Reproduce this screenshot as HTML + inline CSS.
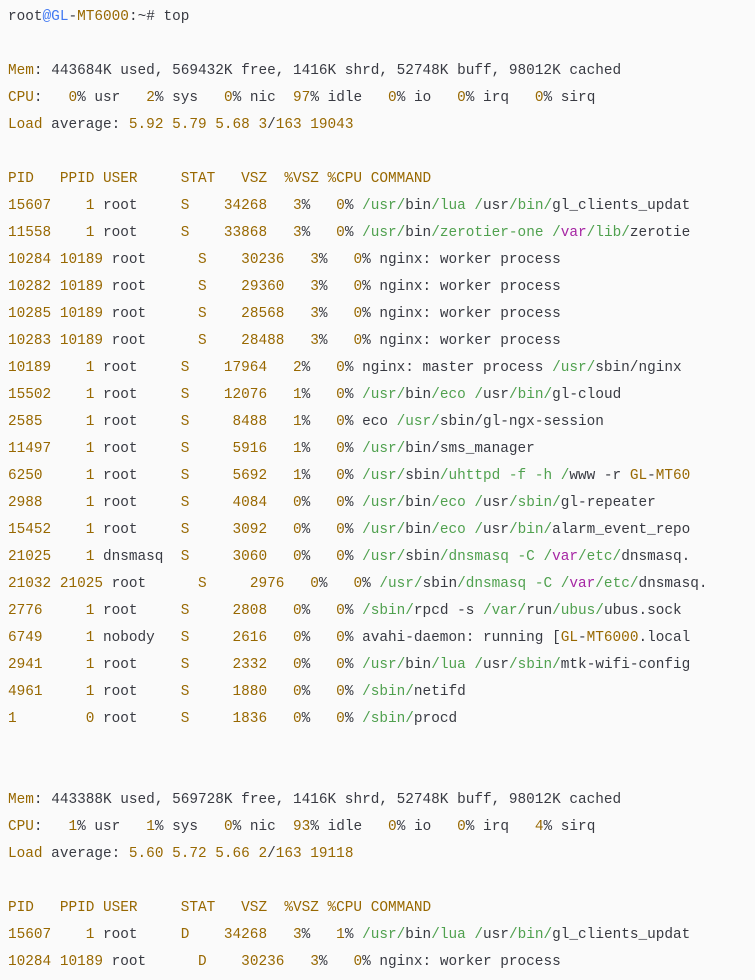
<!DOCTYPE html>
<html><head><meta charset="utf-8"><style>
html,body{margin:0;padding:0;background:#fafafa;width:755px;height:980px;overflow:hidden}
pre{margin:0;padding:4px 0 0 8px;font-family:"Liberation Mono",monospace;font-size:14.4px;line-height:27px;color:#383a42;white-space:pre}
.n{color:#986801}.g{color:#50a14f}.b{color:#4078f2}.p{color:#a626a4}
</style></head><body><pre>root<span class="b">@GL</span>-<span class="n">MT6000</span>:~# top

<span class="n">Mem</span>: 443684K used, 569432K free, 1416K shrd, 52748K buff, 98012K cached
<span class="n">CPU</span>:   <span class="n">0</span>% usr   <span class="n">2</span>% sys   <span class="n">0</span>% nic  <span class="n">97</span>% idle   <span class="n">0</span>% io   <span class="n">0</span>% irq   <span class="n">0</span>% sirq
<span class="n">Load</span> average: <span class="n">5.92 5.79 5.68 3</span>/<span class="n">163 19043</span>

<span class="n">PID   PPID USER     STAT   VSZ  %VSZ %CPU COMMAND</span>
<span class="n">15607    1</span> root     <span class="n">S    34268   3</span>%   <span class="n">0</span>% <span class="g">/usr/</span>bin<span class="g">/lua /</span>usr<span class="g">/bin/</span>gl_clients_updat
<span class="n">11558    1</span> root     <span class="n">S    33868   3</span>%   <span class="n">0</span>% <span class="g">/usr/</span>bin<span class="g">/zerotier-one /</span><span class="p">var</span><span class="g">/lib/</span>zerotie
<span class="n">10284 10189</span> root      <span class="n">S    30236   3</span>%   <span class="n">0</span>% nginx: worker process
<span class="n">10282 10189</span> root      <span class="n">S    29360   3</span>%   <span class="n">0</span>% nginx: worker process
<span class="n">10285 10189</span> root      <span class="n">S    28568   3</span>%   <span class="n">0</span>% nginx: worker process
<span class="n">10283 10189</span> root      <span class="n">S    28488   3</span>%   <span class="n">0</span>% nginx: worker process
<span class="n">10189    1</span> root     <span class="n">S    17964   2</span>%   <span class="n">0</span>% nginx: master process <span class="g">/usr/</span>sbin/nginx
<span class="n">15502    1</span> root     <span class="n">S    12076   1</span>%   <span class="n">0</span>% <span class="g">/usr/</span>bin<span class="g">/eco /</span>usr<span class="g">/bin/</span>gl-cloud
<span class="n">2585     1</span> root     <span class="n">S     8488   1</span>%   <span class="n">0</span>% eco <span class="g">/usr/</span>sbin/gl-ngx-session
<span class="n">11497    1</span> root     <span class="n">S     5916   1</span>%   <span class="n">0</span>% <span class="g">/usr/</span>bin/sms_manager
<span class="n">6250     1</span> root     <span class="n">S     5692   1</span>%   <span class="n">0</span>% <span class="g">/usr/</span>sbin<span class="g">/uhttpd -f -h /</span>www -r <span class="n">GL</span>-<span class="n">MT60</span>
<span class="n">2988     1</span> root     <span class="n">S     4084   0</span>%   <span class="n">0</span>% <span class="g">/usr/</span>bin<span class="g">/eco /</span>usr<span class="g">/sbin/</span>gl-repeater
<span class="n">15452    1</span> root     <span class="n">S     3092   0</span>%   <span class="n">0</span>% <span class="g">/usr/</span>bin<span class="g">/eco /</span>usr<span class="g">/bin/</span>alarm_event_repo
<span class="n">21025    1</span> dnsmasq  <span class="n">S     3060   0</span>%   <span class="n">0</span>% <span class="g">/usr/</span>sbin<span class="g">/dnsmasq -C /</span><span class="p">var</span><span class="g">/etc/</span>dnsmasq.
<span class="n">21032 21025</span> root      <span class="n">S     2976   0</span>%   <span class="n">0</span>% <span class="g">/usr/</span>sbin<span class="g">/dnsmasq -C /</span><span class="p">var</span><span class="g">/etc/</span>dnsmasq.
<span class="n">2776     1</span> root     <span class="n">S     2808   0</span>%   <span class="n">0</span>% <span class="g">/sbin/</span>rpcd -s <span class="g">/var/</span>run<span class="g">/ubus/</span>ubus.sock
<span class="n">6749     1</span> nobody   <span class="n">S     2616   0</span>%   <span class="n">0</span>% avahi-daemon: running [<span class="n">GL</span>-<span class="n">MT6000</span>.local
<span class="n">2941     1</span> root     <span class="n">S     2332   0</span>%   <span class="n">0</span>% <span class="g">/usr/</span>bin<span class="g">/lua /</span>usr<span class="g">/sbin/</span>mtk-wifi-config
<span class="n">4961     1</span> root     <span class="n">S     1880   0</span>%   <span class="n">0</span>% <span class="g">/sbin/</span>netifd
<span class="n">1        0</span> root     <span class="n">S     1836   0</span>%   <span class="n">0</span>% <span class="g">/sbin/</span>procd


<span class="n">Mem</span>: 443388K used, 569728K free, 1416K shrd, 52748K buff, 98012K cached
<span class="n">CPU</span>:   <span class="n">1</span>% usr   <span class="n">1</span>% sys   <span class="n">0</span>% nic  <span class="n">93</span>% idle   <span class="n">0</span>% io   <span class="n">0</span>% irq   <span class="n">4</span>% sirq
<span class="n">Load</span> average: <span class="n">5.60 5.72 5.66 2</span>/<span class="n">163 19118</span>

<span class="n">PID   PPID USER     STAT   VSZ  %VSZ %CPU COMMAND</span>
<span class="n">15607    1</span> root     <span class="n">D    34268   3</span>%   <span class="n">1</span>% <span class="g">/usr/</span>bin<span class="g">/lua /</span>usr<span class="g">/bin/</span>gl_clients_updat
<span class="n">10284 10189</span> root      <span class="n">D    30236   3</span>%   <span class="n">0</span>% nginx: worker process
</pre></body></html>
